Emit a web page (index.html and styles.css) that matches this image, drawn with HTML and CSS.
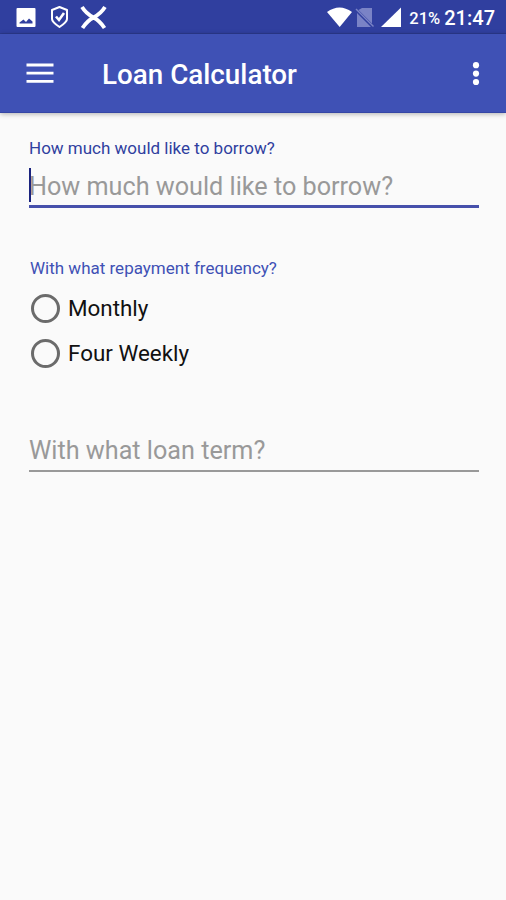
FILE: index.html
```html
<!DOCTYPE html>
<html lang="en">
<head>
    <meta charset="UTF-8">
    <meta name="viewport" content="width=device-width, initial-scale=1.0">
    <title>Loan Calculator</title>
    <link rel="stylesheet" href="styles.css">
</head>
<body>
    <!-- Status bar -->
    <div class="status-bar">
        <svg class="status-left" width="120" height="34" viewBox="0 0 120 34">
            <path fill="#fff" fill-rule="evenodd" d="M17.500 8h17q1 0 1 1v17q0 1-1 1h-17q-1 0-1-1V9q0-1 1-1zM19.500 23.500h13v-2l-3.500-3-3 3.500-2.500-2.500-4 3z"/>
            <path fill="none" stroke="#fff" stroke-width="2" stroke-linejoin="round" d="M59.500 7l7.500 3v9q0 3-7.500 8-7.500-5-7.500-8v-9z"/>
            <path fill="none" stroke="#fff" stroke-width="2.600" d="M56 16.500l3 3.500 5-7"/>
            <path fill="none" stroke="#fff" stroke-width="3.800" d="M82 7Q86 13.500 93.500 17.500Q100 21 104.500 28M105 7Q101 13.500 93.500 17.500Q87 21 82.500 28"/>
        </svg>
        <div class="status-right">
            <svg width="78" height="34" viewBox="0 0 78 34">
                <path fill="#fff" d="M0 12Q12.500 3 25 12L12.700 27z"/>
                <path fill="#7a83c6" d="M35 8h10v15.500L31.500 10zM30 13L44 27H30z"/>
                <path fill="none" stroke="#7a83c6" stroke-width="1.400" d="M29 9l17.500 17.500"/>
                <path fill="#fff" d="M74 7.500V27H54z"/>
            </svg>
            <span class="battery">21%</span>
            <span class="clock">21:47</span>
        </div>
    </div>

    <!-- App bar -->
    <header class="app-bar">
        <svg class="menu-icon" width="28" height="22" viewBox="0 0 28 22">
            <path stroke="#fff" stroke-width="2.800" d="M.5 2h27M.5 10.200h27M.5 18.400h27"/>
        </svg>
        <h1 class="title">Loan Calculator</h1>
        <svg width="8" height="24" viewBox="0 0 8 24">
            <g fill="#fff">
                <circle cx="4" cy="3.200" r="3.100"/>
                <circle cx="4" cy="11.600" r="3.100"/>
                <circle cx="4" cy="20" r="3.100"/>
            </g>
        </svg>
    </header>

    <!-- Loan form -->
    <main class="form">
        <label class="label" for="amount">How much would like to borrow?</label>
        <div class="field focused">
            <span class="caret"></span>
            <input type="text" id="amount" placeholder="How much would like to borrow?">
        </div>

        <div class="label frequency-label">With what repayment frequency?</div>
        <label class="radio"><input type="radio" name="frequency"><span>Monthly</span></label>
        <label class="radio"><input type="radio" name="frequency"><span>Four Weekly</span></label>

        <div class="field term">
            <input type="text" id="term" placeholder="With what loan term?">
        </div>
    </main>
</body>
</html>
```

FILE: styles.css
```css
* {
    box-sizing: border-box;
}
body {
    margin: 0;
    height: 900px;
    overflow: hidden;
    background-color: #fafafa;
    font-family: Roboto, sans-serif;
}
svg {
    display: block;
}
.status-bar {
    display: flex;
    justify-content: space-between;
    height: 34px;
    padding-right: 11px;
    background-color: #303f9f;
    border-bottom: 1px solid #2b398f;
    color: #fff;
    font-weight: 500;
}
.status-right {
    display: flex;
    line-height: 37px;
}
.battery {
    margin-left: 4px;
    font-size: 16.500px;
}
.clock {
    margin-left: 4px;
    font-size: 20px;
}
.app-bar {
    display: flex;
    align-items: center;
    height: 79px;
    padding: 2px 26px 0;
    background-color: #3f51b5;
    border-bottom: 1px solid #3546a5;
    box-shadow: 0 1px 5px rgba(0, 0, 0, 0.3);
    color: #fff;
}
.title {
    flex: 1;
    margin: 2px 0 0 48px;
    font-size: 27.800px;
    font-weight: 500;
    line-height: 36px;
}
.form {
    padding: 24px 27px 0 29px;
}
.label {
    display: block;
    font-size: 17px;
    line-height: 22px;
    color: #303f9f;
}
.field {
    position: relative;
    height: 49px;
    border-bottom: 3px solid #4650ab;
}
.field input {
    display: block;
    width: 100%;
    height: 36px;
    padding: 0;
    border: 0;
    outline: 0;
    background: none;
    font: 25.200px Roboto, sans-serif;
}
.field input::placeholder {
    color: #999;
}
.focused {
    padding-top: 9px;
}
/* text cursor of the active field */
.caret {
    position: absolute;
    left: 0;
    top: 9px;
    width: 2px;
    height: 34px;
    background-color: #1a237e;
}
.frequency-label {
    margin: 49px 0 6px 1px;
    color: #3f51b5;
}
.radio {
    display: flex;
    align-items: center;
    height: 45px;
    padding-left: 2px;
    font-size: 22.400px;
    color: #111;
}
.radio input {
    appearance: none;
    width: 29px;
    height: 29px;
    margin: 1px 8px 0 0;
    border: 3px solid #6b6b6b;
    border-radius: 50%;
}
.term {
    height: 40px;
    margin-top: 57px;
    border-bottom: 2px solid #999;
}
```
